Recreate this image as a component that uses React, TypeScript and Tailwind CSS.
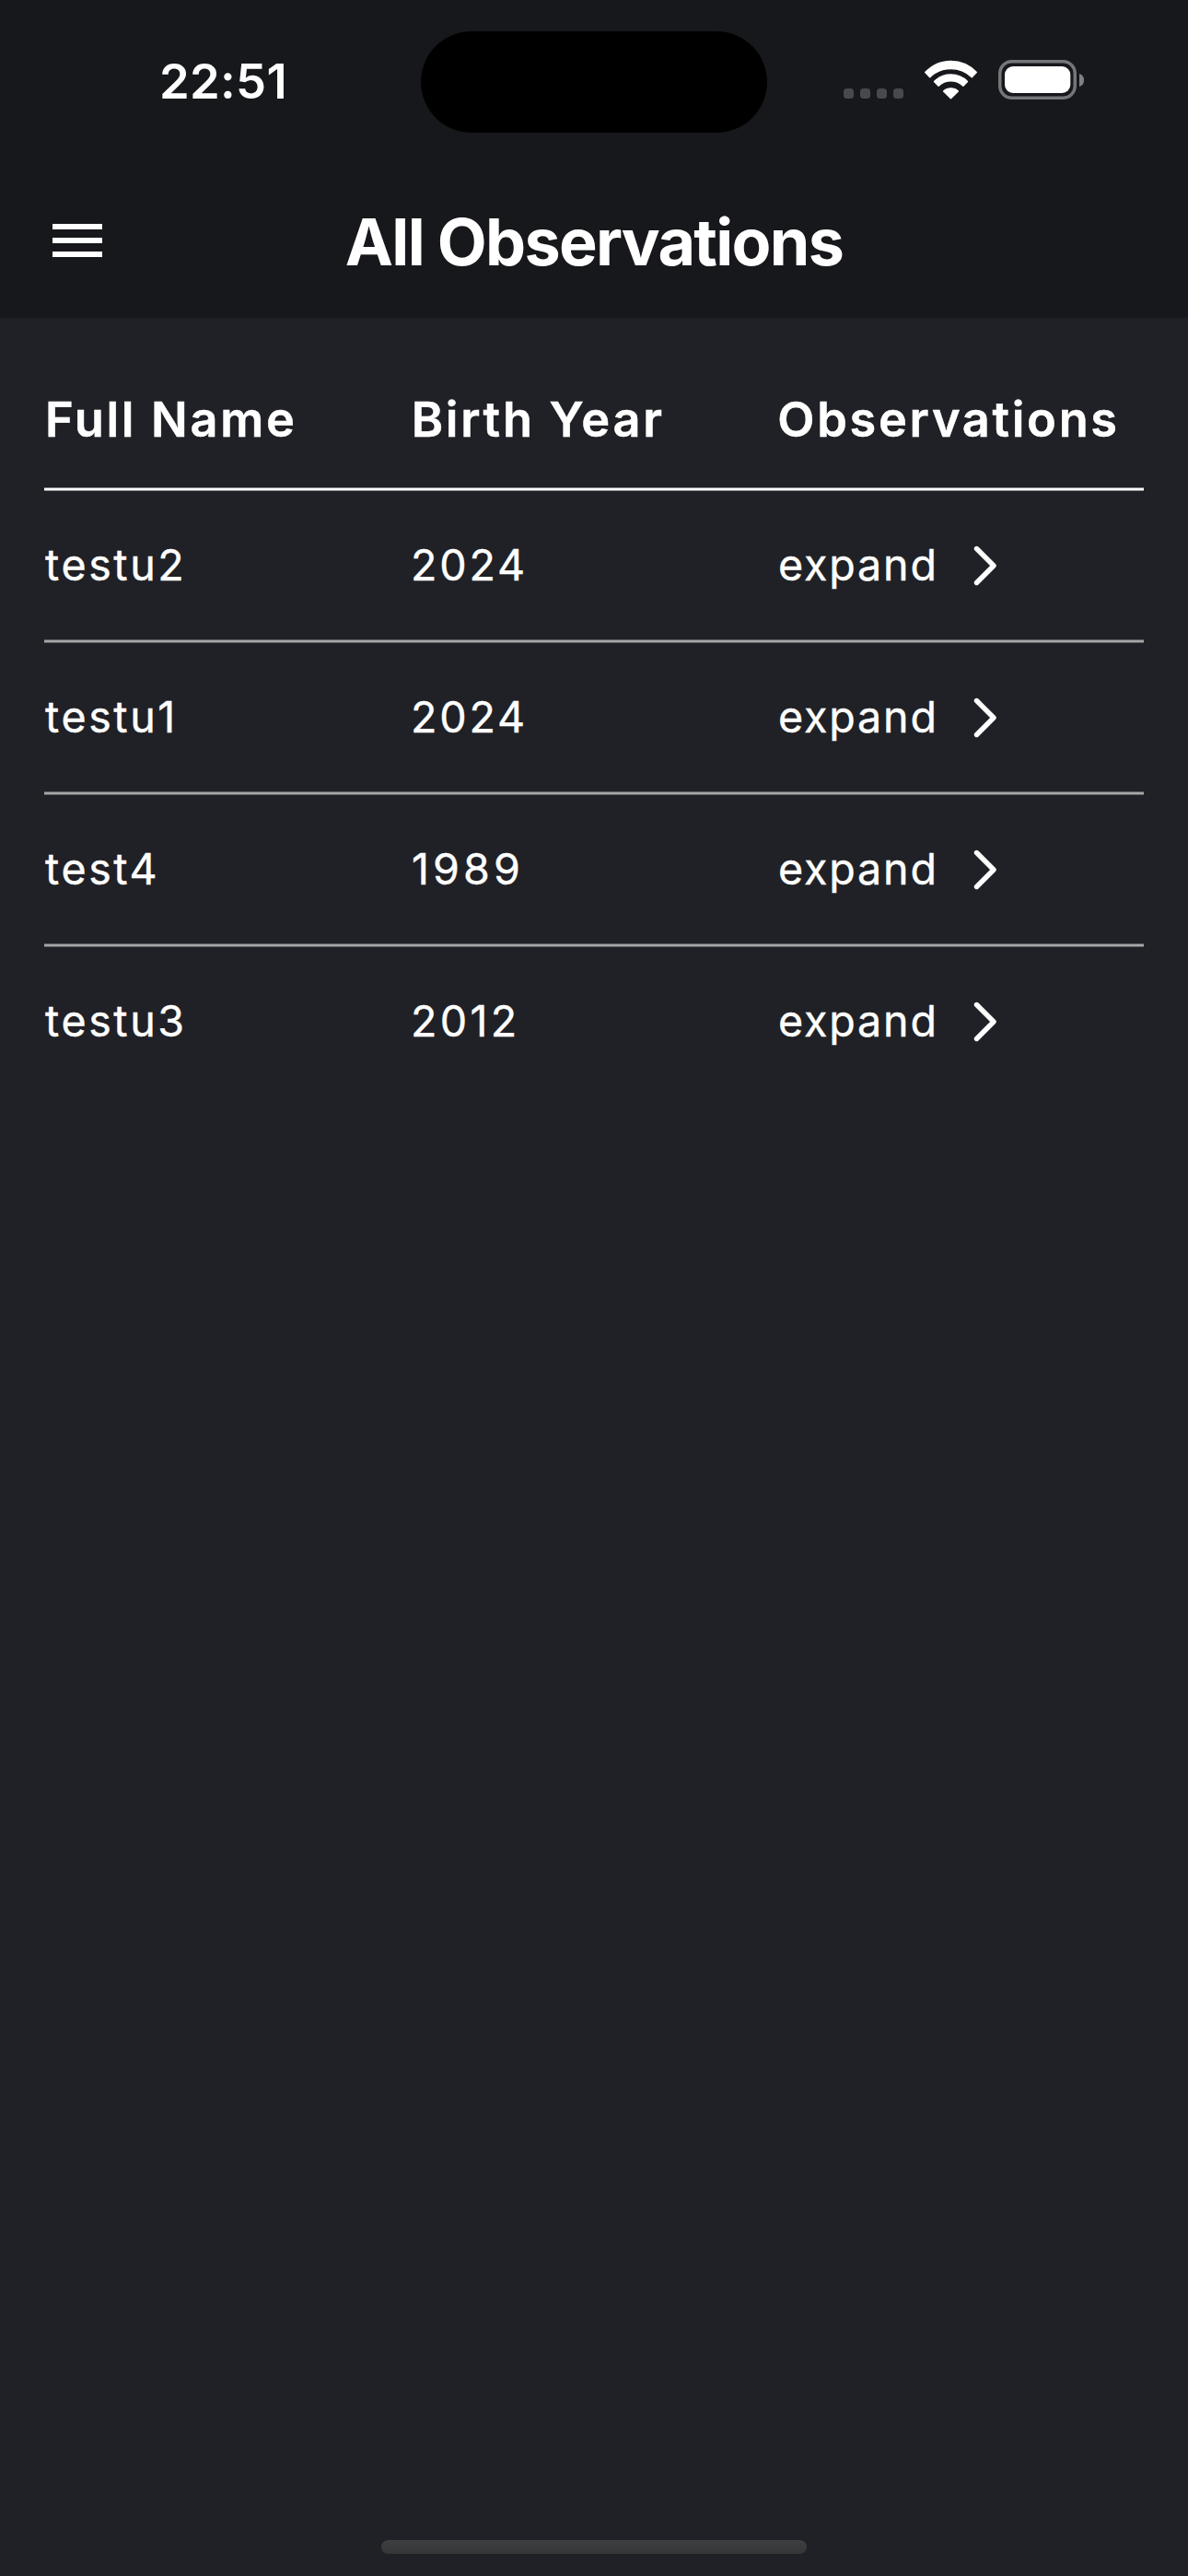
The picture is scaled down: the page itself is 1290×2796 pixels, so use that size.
type Person = { name: string; year: string; yearTracking: string };

const people: Person[] = [
  { name: "testu2", year: "2024", yearTracking: "tracking-[2.8px]" },
  { name: "testu1", year: "2024", yearTracking: "tracking-[2.8px]" },
  { name: "test4", year: "1989", yearTracking: "tracking-[4.1px] pl-px" },
  { name: "testu3", year: "2012", yearTracking: "tracking-[3.3px]" },
];

function WifiIcon() {
  return (
    <svg width="59" height="44" viewBox="0 0 59 44" fill="#fff" stroke="#fff" strokeWidth="1.4" strokeLinejoin="round">
      <path d="M1.7 13.6 A38 38 0 0 1 57.3 13.6 L52.3 18.7 A33 33 0 0 0 6.7 18.7 Z" />
      <path d="M11.5 23.5 A25.5 25.5 0 0 1 47.5 23.5 L42.9 28.3 A19.3 19.3 0 0 0 16.1 28.3 Z" />
      <path d="M21.6 34 A11.5 11.5 0 0 1 37.4 34 L29.5 41.7 Z" />
    </svg>
  );
}

function BatteryIcon() {
  return (
    <svg width="94" height="44" viewBox="0 0 94 44">
      <rect x="1.75" y="1.75" width="81.5" height="39.5" rx="13" fill="none" stroke="#757679" strokeWidth="3.5" />
      <rect x="7" y="7" width="71.3" height="29" rx="9" fill="#fff" />
      <path d="M88 15 Q93 16.5 93 22 Q93 27.5 88 29 Z" fill="#808184" />
    </svg>
  );
}

function StatusBar() {
  return (
    <div className="flex h-[177px]">
      <div className="flex w-[457px] items-center pl-[173px] text-[52.5px] font-semibold leading-none tracking-[0.3px]">
        22:51
      </div>
      <div className="mt-[34px] h-[110px] w-[376px] rounded-full bg-black" />
      <div className="flex pl-[83px] pt-[65px]">
        <div className="mt-[31px] flex gap-[7px]">
          {[0, 1, 2, 3].map((i) => (
            <span key={i} className="size-[11px] rounded-[3.5px] bg-[#48494c]" />
          ))}
        </div>
        <div className="ml-[22px]">
          <WifiIcon />
        </div>
        <div className="ml-[22px]">
          <BatteryIcon />
        </div>
      </div>
    </div>
  );
}

function NavBar() {
  return (
    <div className="grid h-[168px] grid-cols-[1fr_auto_1fr] items-center">
      <button className="ml-[57px] flex w-[54px] flex-col gap-[9px]" aria-label="Menu">
        <span className="h-[6px] w-full bg-white" />
        <span className="h-[6px] w-full bg-white" />
        <span className="h-[6px] w-full bg-white" />
      </button>
      <h1 className="whitespace-nowrap pt-[3px] text-[70px] font-bold leading-none tracking-[-1.7px]">
        All Observations
      </h1>
    </div>
  );
}

function ChevronIcon() {
  return (
    <svg width="26" height="44" viewBox="0 0 26 44" fill="none" stroke="#fff" strokeWidth="5.4" strokeLinecap="round" strokeLinejoin="round">
      <path d="M3.5 3.5 L22 22 L3.5 40.5" />
    </svg>
  );
}

export default function App() {
  return (
    <div className="flex h-[2796px] w-[1290px] flex-col bg-[#202126] font-['Inter',sans-serif] text-white">
      <header className="bg-[#17181b]">
        <StatusBar />
        <NavBar />
      </header>
      <main className="flex-1 px-[48px] pt-[36px]">
        <div className="grid h-[148px] grid-cols-3 items-center whitespace-nowrap pl-px text-[52.3px] font-semibold leading-none tracking-[2.7px] [-webkit-text-stroke:0.5px_white]">
          <div>Full Name</div>
          <div>Birth Year</div>
          <div>Observations</div>
        </div>
        <div className="h-[4px] border-y border-[#909193] bg-white" />
        {people.map((p, i) => (
          <div key={p.name}>
            {i > 0 && <div className="h-[4px] border-y border-[#646568] bg-[#a6a6a7]" />}
            <div className="grid h-[161px] grid-cols-3 items-center text-[46.6px] leading-none [-webkit-text-stroke:0.4px_white]">
              <div className="pl-px tracking-[2.6px]">{p.name}</div>
              <div className={p.yearTracking}>{p.year}</div>
              <div className="flex items-center pl-px">
                <span className="w-[212px] tracking-[1.85px]">expand</span>
                <ChevronIcon />
              </div>
            </div>
          </div>
        ))}
      </main>
      <footer className="flex h-[39px] justify-center">
        <div className="h-[15px] w-[462px] rounded-full bg-linear-to-b from-[#3e3f40] to-[#353638]" />
      </footer>
    </div>
  );
}
